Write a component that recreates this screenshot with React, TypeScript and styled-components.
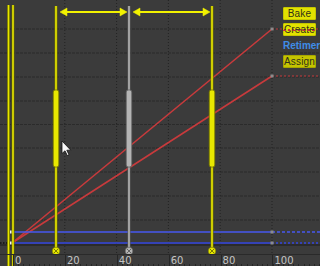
import React from 'react';
import styled, { createGlobalStyle } from 'styled-components';

const GlobalStyle = createGlobalStyle`
  html, body {
    margin: 0;
    padding: 0;
    background: #3a3a3a;
  }
  body {
    font-family: 'Liberation Sans', Arial, sans-serif;
  }
`;

const Frame = styled.div`
  width: 320px;
  height: 266px;
  display: flex;
  flex-direction: column;
  background: #3b3b3b;
  overflow: hidden;
`;

const Graph = styled.div`
  position: relative;
  height: 254px;
  flex-shrink: 0;
`;

const Plot = styled.svg`
  display: block;
  width: 320px;
  height: 254px;
`;

const Toolbar = styled.div`
  position: absolute;
  top: 7px;
  left: 283px;
  width: 37px;
  display: flex;
  flex-direction: column;
  align-items: flex-start;
  gap: 3px;
`;

const ToolButton = styled.div<{ $dim?: boolean; $struck?: boolean }>`
  width: 33px;
  height: 13px;
  box-sizing: border-box;
  display: flex;
  align-items: center;
  justify-content: center;
  background-color: ${p => (p.$dim ? '#c4c400' : '#e2e200')};
  background-image: ${p =>
    p.$struck
      ? 'repeating-linear-gradient(90deg, #c03a3a 0 2px, transparent 2px 4px)'
      : 'none'};
  background-size: 100% 1px;
  background-position: 0 5px;
  background-repeat: no-repeat;
  border: 1px solid ${p => (p.$dim ? '#a6a600' : '#c6c600')};
  border-radius: 1px;
  color: #303018;
  font-size: 10px;
  line-height: 11px;
  letter-spacing: 0.2px;
  text-decoration: ${p => (p.$struck ? 'line-through dashed #c03a3a' : 'none')};
`;

const ToolLabel = styled.div`
  height: 13px;
  display: flex;
  align-items: center;
  color: #3f8de8;
  font-size: 10px;
  font-weight: bold;
  white-space: nowrap;
`;

const Ruler = styled.div`
  height: 12px;
  display: flex;
  border-top: 1px solid #2a2a2a;
  box-sizing: border-box;
  background-color: #3c3c3c;
  background-image: repeating-linear-gradient(90deg, #262626 0 1px, transparent 1px 5.19px);
  background-size: 100% 2px;
  background-position: 13px 100%;
  background-repeat: no-repeat;
`;

const RulerLead = styled.div`
  width: 13px;
  flex-shrink: 0;
`;

const RulerCell = styled.div`
  width: 51.9px;
  flex-shrink: 0;
  box-sizing: border-box;
  border-left: 1px solid #262626;
  padding-left: 1px;
  color: #c4c4c4;
  font-family: 'DejaVu Sans', Verdana, sans-serif;
  font-size: 10px;
  line-height: 11px;
`;

const X0 = 13;
const PX = 2.59;
const fx = (f: number) => X0 + PX * f;

const gridRows = [29, 53, 77, 101, 124.5, 148, 172, 196, 220];
const gridCols = [20, 40, 60, 80, 100].map(fx);

const handles = [
  { x: 56, color: '#e8e800', edge: '#6e6e00' },
  { x: 129, color: '#b4b4b4', edge: '#5a5a5a' },
  { x: 212, color: '#e8e800', edge: '#6e6e00' },
];

const Curves = () => (
  <g>
    <line x1={12} y1={243} x2={272} y2={29} stroke="#c83a3c" strokeWidth={1.6} />
    <line x1={12} y1={243} x2={272} y2={76} stroke="#c83a3c" strokeWidth={1.6} />
    <line x1={272} y1={29} x2={320} y2={29} stroke="#c83a3c" strokeWidth={1} strokeDasharray="2 2" />
    <line x1={272} y1={76} x2={320} y2={76} stroke="#c83a3c" strokeWidth={1} strokeDasharray="2 2" />
    <line x1={0} y1={245} x2={320} y2={245} stroke="#1c1c1c" strokeWidth={1} />
    <line x1={12} y1={232} x2={272} y2={232} stroke="#4758f0" strokeWidth={1.5} />
    <line x1={272} y1={232} x2={320} y2={232} stroke="#4758f0" strokeWidth={1.5} strokeDasharray="3 2" />
    <line x1={12} y1={243} x2={272} y2={243} stroke="#3446e0" strokeWidth={1.6} />
    <line x1={272} y1={243} x2={320} y2={243} stroke="#3446e0" strokeWidth={1.6} strokeDasharray="2 2" />
    <line x1={0} y1={243} x2={8} y2={243} stroke="#111" strokeWidth={1.4} strokeDasharray="1.5 1.5" />
    <rect x={270.5} y={27.5} width={3} height={3} fill="#8c8c8c" />
    <rect x={270.5} y={74.5} width={3} height={3} fill="#8c8c8c" />
    <rect x={270.5} y={230.5} width={3} height={3} fill="#8c8c8c" />
    <rect x={270.5} y={241.5} width={3} height={3} fill="#8c8c8c" />
    <rect x={10} y={230.5} width={3} height={3} fill="#f4f4f4" />
    <rect x={10} y={241.5} width={3} height={3} fill="#f4f4f4" />
  </g>
);

const Handle = ({ x, color, edge }: { x: number; color: string; edge: string }) => (
  <g>
    <line x1={x} y1={6} x2={x} y2={248} stroke={edge} strokeWidth={3} />
    <line x1={x} y1={6} x2={x} y2={248} stroke={color} strokeWidth={1.6} />
    <rect x={x - 2.8} y={90} width={5.6} height={77} rx={2} fill={color} stroke={edge} strokeWidth={0.8} />
    <circle cx={x} cy={251} r={3.8} fill={color} stroke={edge} strokeWidth={0.6} />
    <path d={`M${x - 2} ${249} L${x + 2} ${253} M${x + 2} ${249} L${x - 2} ${253}`} stroke={edge} strokeWidth={0.9} />
  </g>
);

const Arrow = ({ from, to }: { from: number; to: number }) => (
  <g fill="#f2f200" stroke="#f2f200">
    <line x1={from + 5} y1={12} x2={to - 5} y2={12} strokeWidth={1.8} />
    <polygon points={`${from},12 ${from + 7},8 ${from + 7},16`} strokeWidth={0.5} />
    <polygon points={`${to},12 ${to - 7},8 ${to - 7},16`} strokeWidth={0.5} />
  </g>
);

const Cursor = ({ x, y }: { x: number; y: number }) => (
  <path
    transform={`translate(${x} ${y})`}
    d="M0 0 L0 12.5 L3 9.8 L5.3 14.6 L7 13.8 L4.8 9.2 L8.8 9.2 Z"
    fill="#fafafa"
    stroke="#111"
    strokeWidth={0.8}
    strokeLinejoin="round"
  />
);

const LeadLines = ({ top, bottom }: { top: number; bottom: number }) => (
  <>
    {[8.5, 13].map(x => (
      <g key={x}>
        <line x1={x} y1={top} x2={x} y2={bottom} stroke="#5e5e00" strokeWidth={3} />
        <line x1={x} y1={top} x2={x} y2={bottom} stroke="#e8e800" strokeWidth={1.6} />
      </g>
    ))}
  </>
);

export default function App() {
  return (
    <>
      <GlobalStyle />
      <Frame>
        <Graph>
          <Plot viewBox="0 0 320 254">
            {gridRows.map(y => (
              <line key={y} x1={0} y1={y} x2={320} y2={y} stroke="#2b2b2b" strokeWidth={1} strokeDasharray="3 1" />
            ))}
            {gridCols.map(x => (
              <line key={x} x1={x} y1={0} x2={x} y2={254} stroke="#232323" strokeWidth={1} strokeDasharray="1 2" />
            ))}
            <Curves />
            <LeadLines top={5} bottom={254} />
            {handles.map(h => (
              <Handle key={h.x} {...h} />
            ))}
            <Arrow from={60} to={127} />
            <Arrow from={133} to={210} />
            <Cursor x={62} y={141} />
          </Plot>
          <Toolbar>
            <ToolButton>Bake</ToolButton>
            <ToolButton $struck>Create</ToolButton>
            <ToolLabel>Retimer</ToolLabel>
            <ToolButton $dim>Assign</ToolButton>
          </Toolbar>
        </Graph>
        <Ruler>
          <RulerLead>
            <svg width={15} height={11} style={{ display: 'block' }}>
              <LeadLines top={0} bottom={11} />
            </svg>
          </RulerLead>
          {[0, 20, 40, 60, 80, 100].map(n => (
            <RulerCell key={n}>{n}</RulerCell>
          ))}
        </Ruler>
      </Frame>
    </>
  );
}
